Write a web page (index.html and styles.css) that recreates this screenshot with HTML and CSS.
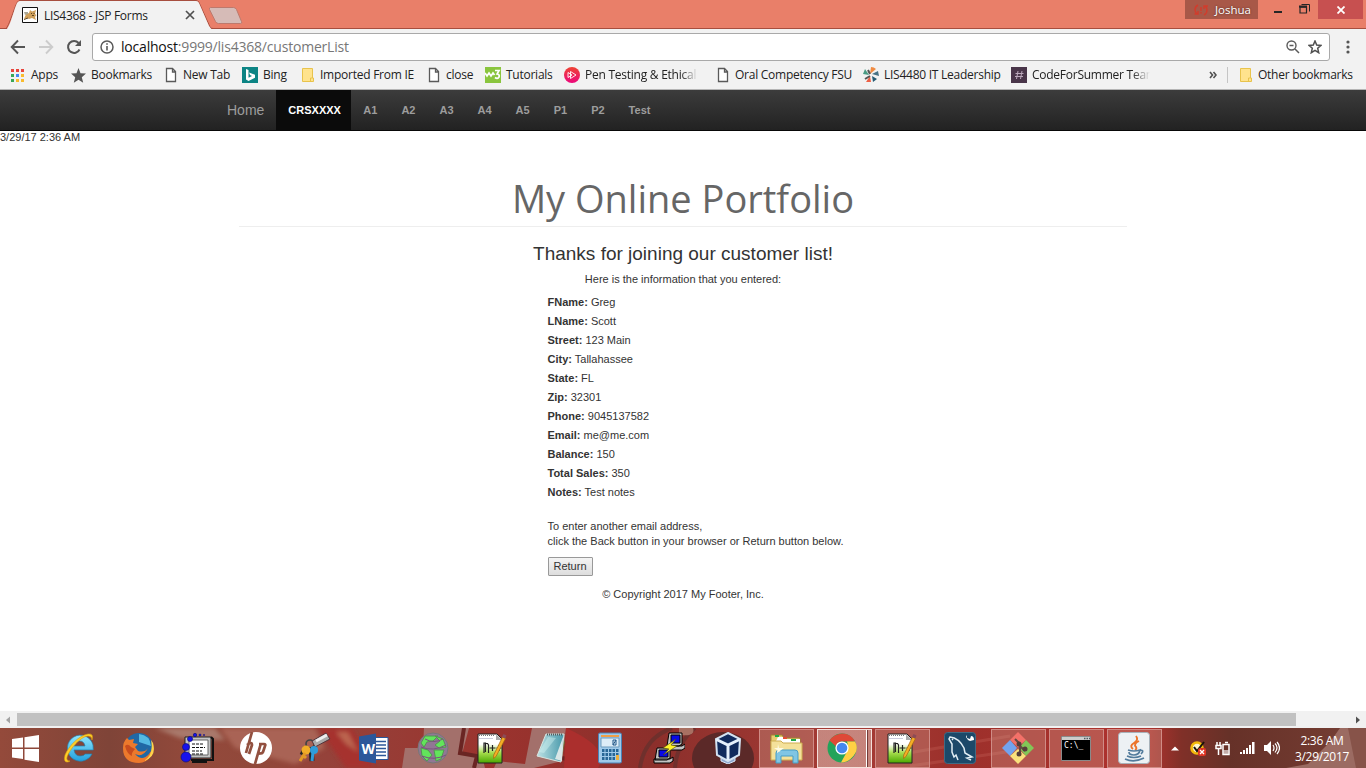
FILE: index.html
```html
<!DOCTYPE html>
<html lang="en">
<head>
<meta charset="utf-8">
<title>LIS4368 - JSP Forms</title>
<link rel="stylesheet" href="styles.css">
</head>
<body>
<svg width="0" height="0" class="defs">
  <symbol id="page" viewBox="0 0 12 16"><path d="M1.5 1.5h6l3 3v10h-9zM7.5 1.5v3.5h3" fill="#fff" stroke="#5a5a5a" stroke-width="1.3"/></symbol>
  <symbol id="folder" viewBox="0 0 14 16"><path d="M1.5 1.5h10v9.500h1v3.500h-11z" fill="#ffe38d" stroke="#e8c34c"/><path d="M9.500 14v-3h2" fill="none" stroke="#e8c34c"/></symbol>
  <symbol id="npp" viewBox="0 0 32 32">
    <defs><linearGradient id="npg" x1="0" y1="0" x2="0" y2="1"><stop offset=".35" stop-color="#fff"/><stop offset=".65" stop-color="#a5dc4c"/><stop offset="1" stop-color="#4aa800"/></linearGradient></defs>
    <path d="M2 2h19l5 5v24H2z" fill="url(#npg)" stroke="#222"/><path d="M20 2v6h6z" fill="#aaa"/><path d="M3 3.500h16" stroke="#777" stroke-dasharray="1 1"/><path d="M3 6.500h14" stroke="#ccd"/>
    <path d="M8 21V11h1.500v9M9.500 11.500h2l1 1.500v8M13.500 16h6m-3-3v6M20.500 16h5m-2.500-3v6" fill="none" stroke="#222" stroke-width="1.200"/>
    <path d="M26.500 5l3 1.500-9.500 18-2.500 2 .2-3.500z" fill="#f5ae25" stroke="#a36510" stroke-width=".7"/><path d="M27.500 2l3 1.500-1.300 3-3.200-1.500z" fill="#8c4b57"/>
  </symbol>
</svg>
<div class="browser">
  <header class="titlebar">
    <svg class="tab-shape" width="250" height="30" viewBox="0 0 250 30"><path d="M0 28.500h5.500C9 28 15 4 18 1.500Q18.500.5 20 .5H196Q198 .5 199 2.500L210 27q.7 1.500 3 1.500h37" fill="none" stroke="#a74e3f"/><path d="M6 30C11 26 15 4 18 2q1-1 2-1H196q2 0 3 2l10 23q2 3 4 4z" fill="#f2f2f2"/><path d="M210.500 7.500h23q2 0 3 2l5 12q1 2-1 2h-22q-2 0-3-2l-6-12q-.5-2 1-2z" fill="#d6bbb7" stroke="#bd796d"/></svg>
    <div class="tab">
      <svg width="16" height="16" viewBox="0 0 16 16"><path d="M.5.500h15v15H.5z" fill="#fff" stroke="#111"/><path d="M2 12l2-5 3-1 1-3 2 1.500 4-1.500-1 4 1.500 1L13 10l1 3-4-2-3 1-2-1z" fill="#d0a05a"/><path d="M2 12.500l4-1.500M9 6l1 1M12 6v1M10 8.500h2" stroke="#5c4321"/><path d="M2 5h4v2l-3 1z" fill="#aaa795"/></svg>
      <span class="tab-title">LIS4368 - JSP Forms</span>
      <svg class="tab-close" width="10" height="10" viewBox="0 0 10 10"><path d="M1 1l8 8M9 1L1 9" stroke="#505050" stroke-width="1.700"/></svg>
    </div>
    <div class="profile"><svg width="14" height="12" viewBox="0 0 14 12"><path d="M4 1Q1 2.500 1 6q0 2 2 4M.5 10H4V7M10 11q3-1.500 3-5 0-2-2-4m3 0h-4v3M7 3v4M7 8v1.500" fill="none" stroke="#d33b2b" stroke-width="1.400"/></svg><span>Joshua</span></div>
    <div class="win-btns">
      <svg width="8" height="18" viewBox="0 0 8 18"><path d="M0 12h8" stroke="#262626" stroke-width="2"/></svg>
      <svg width="11" height="18" viewBox="0 0 11 18"><path d="M1 7h6.500v6H1z" fill="none" stroke="#262626" stroke-width="1.200"/><path d="M.5 7h7.500M2.500 4.500h8v7" fill="none" stroke="#262626"/><path d="M0 6.500h8" stroke="#262626" stroke-width="2"/></svg>
    </div>
    <div class="win-close"><svg width="8" height="8" viewBox="0 0 8 8"><path d="M.5.500l7 7M7.500.500l-7 7" stroke="#fff" stroke-width="1.800"/></svg></div>
  </header>
  <div class="toolbar">
    <div class="history">
      <svg width="16" height="16" viewBox="0 0 16 16"><path d="M15 8H2m6-6.500L1.700 8 8 14.500" fill="none" stroke="#555" stroke-width="1.900"/></svg>
      <svg width="16" height="16" viewBox="0 0 16 16"><path d="M1 8h13M8 1.500L14.300 8 8 14.500" fill="none" stroke="#ccc" stroke-width="1.900"/></svg>
      <svg width="16" height="16" viewBox="0 0 16 16"><path d="M13.500 10.500A6 6 0 1 1 12.600 4" fill="none" stroke="#555" stroke-width="2"/><path d="M15 1v6H9z" fill="#555"/></svg>
    </div>
    <div class="omnibox">
      <svg width="14" height="14" viewBox="0 0 14 14"><circle cx="7" cy="7" r="6" fill="none" stroke="#5a5a5a" stroke-width="1.500"/><path d="M7 6v4.500M7 3.300v1.500" stroke="#5a5a5a" stroke-width="1.600"/></svg>
      <span class="url"><b>localhost</b>:9999/lis4368/customerList</span>
      <svg width="14" height="14" viewBox="0 0 14 14"><circle cx="5.500" cy="5.500" r="4.500" fill="none" stroke="#5a5a5a" stroke-width="1.400"/><path d="M9 9l4 4M3.500 5.500h4" stroke="#5a5a5a" stroke-width="1.500"/></svg>
      <svg class="star" width="14" height="14" viewBox="0 0 14 14"><path d="M7 1l1.700 4.100 4.300.3-3.300 2.900 1 4.400L7 10.300l-3.700 2.400 1-4.400L1 5.400l4.300-.3z" fill="none" stroke="#505050" stroke-width="1.500"/></svg>
    </div>
    <svg class="dots" width="4" height="14" viewBox="0 0 4 14"><g fill="#555"><circle cx="2" cy="2" r="1.600"/><circle cx="2" cy="7" r="1.600"/><circle cx="2" cy="12" r="1.600"/></g></svg>
  </div>
  <div class="bookmarks">
    <div class="bm"><svg width="14" height="14" viewBox="0 0 14 14"><path d="M1 1h3v3H1zM6 1h3v3H6zM11 1h3v3h-3z" fill="#e8453c"/><path d="M1 6h3v3H1zM1 11h3v3H1z" fill="#3aa757"/><path d="M6 6h3v3H6z" fill="#4688f1"/><path d="M11 6h3v3h-3zM6 11h3v3H6zM11 11h3v3h-3z" fill="#f9bb2d"/></svg><span class="apps">Apps</span></div>
    <div class="bm"><svg width="15" height="15" viewBox="0 0 15 15"><path d="M7.500 0l2 5.200 5.500.4-4.200 3.600 1.400 5.500-4.700-3-4.700 3 1.400-5.500L0 5.600l5.500-.4z" fill="#555"/></svg><span>Bookmarks</span></div>
    <div class="bm narrow"><svg width="12" height="16"><use href="#page"/></svg><span>New Tab</span></div>
    <div class="bm"><svg width="16" height="16" viewBox="0 0 16 16"><path d="M0 0h16v16H0z" fill="#0c8484"/><path d="M4 2l2.500 1v7.700L10 9 8 8 7 5.500l6 2.200v3L6.500 14 4 12.500z" fill="#fff"/></svg><span>Bing</span></div>
    <div class="bm f"><svg width="14" height="16"><use href="#folder"/></svg><span>Imported From IE</span></div>
    <div class="bm narrow"><svg width="12" height="16"><use href="#page"/></svg><span>close</span></div>
    <div class="bm"><svg width="16" height="16" viewBox="0 0 16 16"><path d="M0 0h16v16H0z" fill="#8ac53e"/><path d="M0 6l2 3 2-3 2 3 2-3 1.500 2M10 3.500h4L12 7q3 .5 2 3-1.500 2.500-4 .5" fill="none" stroke="#fff" stroke-width="1.700"/></svg><span>Tutorials</span></div>
    <div class="bm fade"><svg width="16" height="16" viewBox="0 0 16 16"><defs><linearGradient id="ps" x1="0" y1="0" x2="0" y2="1"><stop stop-color="#ee4333"/><stop offset="1" stop-color="#ec087c"/></linearGradient></defs><circle cx="8" cy="8" r="8" fill="url(#ps)"/><path d="M6.500 4.500L12 8l-5.500 3.500zM4 5.500v5L8 8z" fill="none" stroke="#fff" stroke-width=".9"/></svg><span>Pen Testing &amp; Ethical</span></div>
    <div class="bm narrow"><svg width="12" height="16"><use href="#page"/></svg><span>Oral Competency FSU</span></div>
    <div class="bm"><svg width="16" height="16" viewBox="0 0 16 16"><path d="M7 7L8 0q3 0 5 2z" fill="#f08b42"/><path d="M9 7l6-3 1 5z" fill="#467184"/><path d="M9 9l5 3-4 3z" fill="#255a72"/><path d="M7 9l1 6-5 0z" fill="#ee6045"/><path d="M6 8L0 7l2-5z" fill="#4a9b84"/><path d="M2 12l5-3M5 3l2 4" stroke="#555" stroke-width="2"/></svg><span>LIS4480 IT Leadership</span></div>
    <div class="bm fade"><svg width="16" height="16" viewBox="0 0 16 16"><path d="M0 0h16v16H0z" fill="#493549"/><path d="M7 4L5.500 12M11 4L9.500 12M4.500 6.500h8M4 9.500h8" stroke="#bba8bb"/></svg><span class="code">CodeForSummer Team</span></div>
    <svg class="more" width="8" height="8" viewBox="0 0 8 8"><path d="M1 1l2.500 3L1 7M4.500 1L7 4 4.500 7" fill="none" stroke="#505050" stroke-width="1.600"/></svg>
    <div class="bm f other"><svg width="14" height="16"><use href="#folder"/></svg><span>Other bookmarks</span></div>
  </div>
  <nav class="nav"><a class="brand">Home</a><a class="active">CRSXXXX</a><a>A1</a><a>A2</a><a>A3</a><a>A4</a><a>A5</a><a>P1</a><a>P2</a><a>Test</a></nav>
  <main class="page">
    <div class="stamp">3/29/17 2:36 AM</div>
    <h1>My Online Portfolio</h1>
    <h2>Thanks for joining our customer list!</h2>
    <p class="intro">Here is the information that you entered:</p>
    <div class="info">
      <div><b>FName:</b> Greg</div><div><b>LName:</b> Scott</div><div><b>Street:</b> 123 Main</div><div><b>City:</b> Tallahassee</div><div><b>State:</b> FL</div><div><b>Zip:</b> 32301</div><div><b>Phone:</b> 9045137582</div><div><b>Email:</b> me@me.com</div><div><b>Balance:</b> 150</div><div><b>Total Sales:</b> 350</div><div><b>Notes:</b> Test notes</div>
      <p class="again">To enter another email address,<br>click the Back button in your browser or Return button below.</p>
      <button>Return</button>
    </div>
    <footer>© Copyright 2017 My Footer, Inc.</footer>
  </main>
  <div class="scroll"><svg width="17" height="16" viewBox="0 0 17 16"><path d="M10 4.500v7L6 8z" fill="#a3a3a3"/></svg><div class="thumb"></div><svg width="17" height="16" viewBox="0 0 17 16"><path d="M7 4.500v7L11 8z" fill="#505050"/></svg></div>
</div>
<div class="taskbar">
  <svg class="wall" width="1366" height="40" viewBox="0 0 1366 40">
    <defs><linearGradient id="wg"><stop stop-color="#944a3b"/><stop offset=".08" stop-color="#7f4438"/><stop offset=".14" stop-color="#93493b"/><stop offset=".19" stop-color="#91483a"/><stop offset=".24" stop-color="#95423a"/><stop offset=".36" stop-color="#9b332e"/><stop offset=".48" stop-color="#8c2f2b"/><stop offset=".62" stop-color="#a63c36"/><stop offset=".7" stop-color="#9c302b"/><stop offset=".84" stop-color="#b0322e"/><stop offset=".865" stop-color="#803028"/><stop offset=".9" stop-color="#663128"/><stop offset=".96" stop-color="#70392f"/><stop offset="1" stop-color="#754238"/></linearGradient><filter id="bl"><feGaussianBlur stdDeviation="2"/></filter></defs>
    <path d="M0 0h1366v40H0z" fill="url(#wg)"/>
    <g filter="url(#bl)"><path d="M155 0h60l10 12-45-2z" fill="#a9796c"/><path d="M220 0h95l10 20-30 16-60-16z" fill="#a96454"/><path d="M318 0l28 40h28L352 0z" fill="#a6322f"/><path d="M336 4l12 0 10 20-12-8z" fill="#bb6550"/></g>
    <path d="M424 0h45l-7 26 20 2 3 12h-83l3-20 18 0z" fill="#a3706b"/><path d="M532 0h34l-4 33-28 7h-40l3-7 28 3z" fill="#a3706b"/><path d="M464 0l-4 25 17 3-3 12M562 30l28 6" fill="none" stroke="#6a2523" stroke-width="4"/>
    <path d="M566 0q45 20 32 40h-34z" fill="#ab2f2d"/><path d="M640 40q4-30 32-40M675 40q2-25 20-40" fill="none" stroke="#62312d" stroke-width="4" opacity=".7"/><path d="M679 0h14q3 9-14 7z" fill="#a87062"/><ellipse cx="723" cy="30" rx="31" ry="26" fill="#5b2928"/>
    <path d="M890 28l120-20M910 38l110-16" stroke="#bf5a51" stroke-width="3" opacity=".4"/><path d="M1286 40l22-4 22-22 10-14h26v40z" fill="#9b6b62"/><path d="M1348 0h18v40h-10z" fill="#875349"/>
  </svg>
  <div class="start"><svg width="27" height="27" viewBox="0 0 27 27"><path d="M0 4l11-1.500v10H0zM12.500 2.300L27 0v12.500H12.500zM0 14h11v10L0 22.500zM12.500 14H27v13l-14.500-2.300z" fill="#fff"/></svg></div>
  <div class="pinned">
    <i><svg width="32" height="32" viewBox="0 0 32 32"><defs><linearGradient id="ie" x1="0" y1="0" x2="0" y2="1"><stop stop-color="#8fe7ff"/><stop offset="1" stop-color="#23a0dd"/></linearGradient></defs><path d="M29 22a13 13 0 1 1 1-9l.3 5H11q1 6 6 6 4 0 5-2zM11 14h11q-1-5-5.500-5T11 14z" fill="url(#ie)" stroke="#247fae" stroke-width=".7"/><path d="M5 30Q0 31 2 23C6 14 15 4 25 2q6-1 4 6 0-4-4-4C17 5 7 17 4 25q-1 4 3 4z" fill="#ffce27" stroke="#d99d11" stroke-width=".6"/></svg></i>
    <i><svg width="32" height="32" viewBox="0 0 32 32"><circle cx="17" cy="15" r="14" fill="#2068a5"/><path d="M17 2q11 1 12 12L17 10z" fill="#54b9e3"/><path d="M30 10q2 20-13 21Q1 31 1 16q0-6 4-10l2 2 5-1-1 4 5 1-3 3 3 4q7 2 10-3-5 10-13 6 7 8 14 0 5-6 3-12z" fill="#ec792c"/><path d="M29 8q3 15-7 21 13-4 9-18z" fill="#ffd34a"/><path d="M3 14q3-3 6 1l4 2q-4 4-3 7-5-2-7-10z" fill="#c94c1e"/></svg></i>
    <i><svg width="34" height="32" viewBox="0 0 34 32"><path d="M5 5h26v21H5z" fill="#c3c3c3" stroke="#222"/><path d="M9 8h19v15H9z" fill="#fff" stroke="#666"/><path d="M31 5l2 2v21H11" fill="none" stroke="#111" stroke-width="2"/><path d="M12 12h12M12 15.500h13M12 19h10M12 22h12" stroke="#111" stroke-dasharray="3 1"/><path d="M12 30h15" stroke="#111" stroke-width="2"/><g fill="#1712ed" stroke="#101078" stroke-width=".7"><circle cx="6" cy="25" r="5"/><circle cx="6" cy="15" r="3.500"/><circle cx="10" cy="7" r="2.500"/><circle cx="15" cy="3" r="1.700"/><circle cx="20" cy="3" r="1"/><circle cx="24" cy="3" r=".6"/></g></svg></i>
    <i><svg width="32" height="32" viewBox="0 0 32 32"><circle cx="16" cy="16" r="16" fill="#fff"/><path d="M12 0L6 21M7 13q5-4 5 0l-3 9M21 11l-6 21M19 12h5q2 0 1 2l-2 6q-.7 2-6 1.500" fill="none" stroke="#92503f" stroke-width="2.700"/></svg></i>
    <i><svg width="32" height="32" viewBox="0 0 32 32"><circle cx="11" cy="12" r="4" fill="none" stroke="#444" stroke-width="1.700"/><path d="M13 9L27 1l4 6-15 8z" fill="#aaa" stroke="#54343b"/><path d="M17 9L28 3" stroke="#eee" stroke-width="3"/><path d="M7 15l-4 8M12 15l1 14" stroke="#252525" stroke-width="5"/><circle cx="7" cy="18" r="4.500" fill="#f1ad28"/><path d="M6 21l-5 8M5 24l2 2" stroke="#e19925" stroke-width="3"/><circle cx="15" cy="18" r="4" fill="#2f9dda"/><path d="M14 20l-1 9" stroke="#2f9dda" stroke-width="3"/></svg></i>
    <i><svg width="31" height="31" viewBox="0 0 31 31"><path d="M15 4.500h15v22H15z" fill="#fff" stroke="#2b579a"/><path d="M18 8.500h10M18 12h10M18 15.500h10M18 19h10M18 22.500h10" stroke="#2b579a" stroke-width="1.500"/><path d="M1 3.500L18 .5v30L1 27.500z" fill="#2b579a"/><text x="3.500" y="20.500" class="w">W</text></svg></i>
    <i><svg width="32" height="32" viewBox="0 0 32 32"><circle cx="16" cy="16" r="15" fill="#917794" stroke="#777"/><path d="M8 4h13l-5 5-6 1-3 5-3-4zM18 4l8 3 3 8-7 1-4-3 5-4zM4 16l7 2 4 5-5 6-5-5zM17 18h10l-3 9-5 2z" fill="#62e45b" stroke="#559454"/><path d="M4 15q12 5 25-2M5 24q12 5 24-1M8 7q9 5 18 0" fill="none" stroke="#7c527f"/></svg></i>
    <i><svg width="32" height="32"><use href="#npp"/></svg></i>
    <i><svg width="32" height="32" viewBox="0 0 32 32"><defs><linearGradient id="np"><stop stop-color="#bde2e5"/><stop offset="1" stop-color="#4798aa"/></linearGradient></defs><path d="M27 5l3 5-4 20-4-2z" fill="#716836"/><path d="M11 2h18l-3 28-24-6z" fill="url(#np)" stroke="#d9e4df"/><path d="M28 5l-1 24-7-2z" fill="#d9e7e7"/><path d="M12 2.500h16" stroke="#545a5d" stroke-width="2" stroke-dasharray="1 1"/><path d="M13 5l8 1-12 15-5-1z" fill="#d9f7f4" opacity=".4"/></svg></i>
    <i><svg width="24" height="32" viewBox="0 0 24 32"><rect x=".5" y="1" width="23" height="30" rx="1.500" fill="#9fcaea" stroke="#4983b7"/><path d="M3 3h18v2H3z" fill="#ef9f48"/><path d="M3 6h18v9H3z" fill="#dcecf7" stroke="#6d9bbd"/><path d="M15 8h3v5h-3zM15 13l3-5" fill="none" stroke="#235889"/><path d="M4 18.500h17M4 22.500h17M4 26.500h17" stroke="#286797" stroke-width="3" stroke-dasharray="2.500 1"/><path d="M18 23h3v5h-3z" fill="#efb13f"/></svg></i>
    <i><svg width="32" height="32" viewBox="0 0 32 32"><g stroke="#000" fill="#c2c2c2"><path d="M16 1h13v11l-3 2H14zM14 14h15l3-2v4l-3 2H14z"/><path d="M4 16h13v10l-3 2H2zM1 27h16l3-2v4l-3 2H1z"/></g><path d="M18 3h9v8h-9zM6 18h9v7H6z" fill="#0909e7" stroke="#000"/><path d="M23 7l-13 9 6 1-6 6 14-9-6-1z" fill="#fff32a" stroke="#46430a" stroke-width=".6"/></svg></i>
    <i><svg width="30" height="32" viewBox="0 0 30 32"><path d="M8 25v4l7 3 7-3v-4z" fill="#8da7cf" stroke="#dbe8f8"/><path d="M15 1l12 6-1 16-11 6-11-6L3 7z" fill="#112b5d" stroke="#d4e3f2" stroke-width="2"/><path d="M3.500 7.500L15 13l11.500-5.500M15 13v15" stroke="#e5f0fc" stroke-width="3" fill="none"/></svg></i>
  </div>
  <div class="running">
    <i><b><svg width="33" height="32" viewBox="0 0 33 32"><path d="M1 3h11l2 3h16v20H1z" fill="#e6cc70" stroke="#9e8132"/><path d="M8 5h5l2 2h15v4H5z" fill="#fff"/><path d="M5 4h4M13 6h4M21 8h5" stroke="#20a944" stroke-width="2"/><path d="M13 6h4" stroke="#e24b34" stroke-width="2"/><path d="M1 9h10l2 2h19v17H1z" fill="#f4e19a" stroke="#cead50"/><path d="M6 31v-10q0-3 3-3h16q3 0 3 3v10h-5v-7H11v7z" fill="#80c5e4" stroke="#479dc5"/><path d="M8 12l2 8-6-4h10l-7 5z" fill="#fffbe1"/></svg></b></i>
    <i><b class="current"><svg width="30" height="30" viewBox="0 0 30 30"><circle cx="15" cy="15" r="14.500" fill="#24a35a"/><path d="M2.500 7.500Q7 1 15 .5q9 0 13 8H15q-5 0-6 5z" fill="#df4937"/><path d="M28 8.500q5 9-4 17-4 4-10 4l6-11q2-4 0-10z" fill="#ffd044"/><circle cx="15" cy="15" r="6.600" fill="#fff"/><circle cx="15" cy="15" r="5.300" fill="#4588ef"/></svg></b></i>
    <i><b><svg width="32" height="32"><use href="#npp"/></svg></b></i>
    <i><svg width="32" height="32" viewBox="0 0 32 32"><rect x=".5" y=".5" width="31" height="31" rx="3" fill="#1c4969" stroke="#416a83"/><path d="M20 16q-5-10-14-11l-1 2 3 5 0 8 2 5 2-2 2 5M20 16l1 5 7 4-5 1 4 2M8 7l1 1" fill="none" stroke="#e1eef4" stroke-width="1.500"/><path d="M23 3v3l3 1 1-3q3 0 3 4l-4 1-2-1-2-3z" fill="#fff"/></svg></i>
    <i><b><svg width="32" height="32" viewBox="0 0 32 32"><path d="M16 0l8 8-8 7-8-7z" fill="#f37169"/><path d="M8 8l7 8-7 8-8-8z" fill="#72a3ef"/><path d="M24 8l8 8-8 8-7-8z" fill="#82c657"/><path d="M16 17l8 7-8 8-8-8z" fill="#fae17c"/><path d="M13 7l5 5v10M18 14l5 5" fill="none" stroke="#614844" stroke-width="2"/><g fill="#553e3a"><circle cx="17" cy="12" r="2.500"/><circle cx="23" cy="17" r="2.500"/><circle cx="17" cy="22" r="2.500"/></g></svg></b></i>
    <i><b><svg width="30" height="25" viewBox="0 0 30 25"><path d="M.5.500h29v24H.5z" fill="#000" stroke="#8a8a8a"/><path d="M1 1h28v3H1z" fill="#ccc"/><path d="M23 2.500h6" stroke="#51585e" stroke-width="1.500" stroke-dasharray="1.500 1"/><text x="3" y="12" class="cmd">C:\_</text></svg></b></i>
    <i><b><svg width="32" height="32" viewBox="0 0 32 32"><rect x=".5" y=".5" width="31" height="31" rx="3" fill="#edf1f4" stroke="#a8b2ba"/><path d="M18 4q3 4-2 7t-1 6M21 9q-6 3-3 6 1 2-1 3" fill="none" stroke="#ec742a" stroke-width="1.900"/><path d="M10 18q6 2 12 0-1 5-6 5t-5-3M22 18q5 0 1 4M9 24q7 3 14 0M7 27q9 4 19-1" fill="none" stroke="#527b9c" stroke-width="1.700"/></svg></b></i>
  </div>
  <div class="tray">
    <svg class="up" width="8" height="5" viewBox="0 0 8 5"><path d="M0 4.500L4 .5l4 4z" fill="#fff"/></svg>
    <svg width="16" height="16" viewBox="0 0 16 16"><circle cx="7" cy="8" r="5.500" fill="#fff5cd" stroke="#f3b90b" stroke-width="2.600"/><path d="M4 7l3 4 7-9" fill="none" stroke="#17130a" stroke-width="2"/><rect x="8" y="8" width="8" height="8" rx="2" fill="#df3525"/><path d="M10 10l4 4M14 10l-4 4" stroke="#fff" stroke-width="1.300"/></svg>
    <svg width="16" height="16" viewBox="0 0 16 16"><path d="M8 4.500h6v10H8zM10 2.500h3M1 5.500h5v3H1zM3.500 8v7M2 2v3M5 2v3" fill="none" stroke="#fff" stroke-width="1.500"/><path d="M8.500 10h5v4h-5z" fill="#fff" opacity=".6"/></svg>
    <svg width="15" height="12" viewBox="0 0 15 12"><path d="M0 10h2v2H0zM3 8h2v4H3zM6 6h2v6H6zM9 3h2v9H9zM12 0h2.500v12H12z" fill="#fff"/></svg>
    <svg width="16" height="14" viewBox="0 0 16 14"><path d="M0 4h3l4-4v14l-4-4H0z" fill="#fff"/><path d="M9 4q2 3 0 6M11 2.500q4 4 0 9M13 1q5 6 0 12" fill="none" stroke="#fff" stroke-width="1.200"/></svg>
  </div>
  <div class="clock"><span>2:36 AM</span><span>3/29/2017</span></div>
</div>
</body>
</html>
```
FILE: styles.css
```css
* { box-sizing: border-box; }
body { margin: 0; width: 1366px; height: 768px; overflow: hidden; background: #fff; font: 11px/15px "Liberation Sans", Arial, sans-serif; color: #333; }
svg { display: block; flex: none; }
.defs { position: absolute; }
.browser { height: 728px; display: flex; flex-direction: column; }
.titlebar { height: 29px; flex: none; display: flex; align-items: flex-start; position: relative; background: linear-gradient(#e97f69 27px, #e97f69 28px, #a74e3f 28px); font-family: "Open Sans", sans-serif; }
.tab-shape { position: absolute; left: 0; top: 0; }
.tab { position: relative; display: flex; align-items: center; width: 210px; height: 30px; padding-left: 22px; }
.tab-title { width: 141px; margin-left: 6px; font-size: 12px; letter-spacing: -.28px; color: #222; white-space: nowrap; }
.profile { margin-left: 975px; width: 73px; height: 19px; display: flex; align-items: center; gap: 7px; padding-left: 9px; background: #a85848; color: #fff; font-size: 11.5px; text-shadow: 0 0 2px #4a2a24; }
.win-btns { width: 60px; display: flex; padding-left: 16px; gap: 17px; }
.win-close { width: 45px; height: 19px; display: grid; place-items: center; background: #c75050; }
.toolbar { height: 32px; flex: none; display: flex; align-items: center; background: #f2f2f2; padding: 4px 16px 0 10px; }
.history { display: flex; gap: 12px; width: 82px; }
.omnibox { width: 1238px; height: 28px; display: flex; align-items: center; padding: 0 7px; background: #fff; border: 1px solid #a9a9a9; border-radius: 3px; }
.url { flex: 1; margin-left: 7px; font: 14px/20px "Open Sans", sans-serif; letter-spacing: -.2px; color: #777; }
.url b { font-weight: 400; color: #111; }
.star { margin-left: 8px; }
.dots { margin-left: 16px; }
.bookmarks { height: 29px; flex: none; display: grid; grid-template-columns: 61px 94px 77px 59px 127px 57px 79px 153px 146px 148px 198px 18px 1fr; align-items: center; padding-left: 10px; background: #f2f2f2; border-bottom: 1px solid #b5b5b5; font: 12px/16px "Open Sans", sans-serif; letter-spacing: -.25px; color: #222; white-space: nowrap; }
.bm { display: flex; align-items: center; gap: 5px; }
.apps { margin-left: 2px; }
.narrow { gap: 6px; }
.f { gap: 5px; }
.fade span { width: 113px; overflow: hidden; -webkit-mask-image: linear-gradient(90deg, #000 85%, transparent); }
.fade .code { width: 118px; }
.other { border-left: 1px solid #c5c5c5; padding-left: 11px; }
.nav { height: 41px; flex: none; display: flex; padding-left: 215px; background: linear-gradient(#3c3c3c, #222); border-bottom: 1px solid #080808; color: #9d9d9d; line-height: 40px; }
.nav a { padding: 0 12px; }
.nav .brand { font-size: 14px; }
.nav .active { color: #fff; font-weight: 700; background: #0b0b0b; width: 75px; }
.nav a:not(.brand):not(.active) { font-weight: 700; }
.page { flex: 1; display: flex; flex-direction: column; align-items: center; }
.stamp { align-self: flex-start; margin-top: -1px; }
h1 { width: 888px; height: 48px; margin: 34px 0 0; padding-bottom: 8px; border-bottom: 1px solid #eee; text-align: center; font: 38px/38px "Open Sans", sans-serif; color: #666; }
h2 { margin: 16px 0 0; font-size: 19px; line-height: 22px; font-weight: 400; }
.intro { margin: 7px 0 0; }
.info { width: 296px; margin: 6px 0 0 25px; line-height: 19px; white-space: nowrap; }
.again { margin: 17px 0 8px; line-height: 15px; }
.info button { display: block; width: 45px; height: 19px; padding: 0; border: 1px solid #999; border-radius: 1px; background: linear-gradient(#f4f4f4, #ddd); color: #333; font: 11px/15px "Liberation Sans", sans-serif; }
footer { margin-top: 11px; }
.scroll { height: 17px; flex: none; display: flex; align-items: center; background: #f1f1f1; }
.thumb { width: 1279px; height: 13px; margin-right: 53px; background: #c1c1c1; }
.taskbar { height: 40px; position: relative; display: flex; }
.wall { position: absolute; left: 0; top: 0; }
.start, .pinned, .running, .tray, .clock { position: relative; display: flex; align-items: center; }
.start { width: 49px; padding-left: 12px; }
.pinned i { width: 59px; display: grid; place-items: center; }
.running i { width: 58px; display: flex; align-items: center; justify-content: center; height: 40px; }
.running b { width: 55px; height: 39px; margin-left: 0; display: grid; place-items: center; border: 1px solid #d08c86; background: rgba(220, 190, 170, .27); }
.running .current { width: 55px; padding-right: 5px; border-color: #f4dfda; background: linear-gradient(90deg, rgba(230, 205, 195, .5) 48px, #fff 48px, #fff 49px, #713c38 49px, #713c38 50px, rgba(230, 205, 195, .5) 50px); }
.w { font: 700 14px "Open Sans", sans-serif; fill: #fff; }
.cmd { font: 8px "DejaVu Sans Mono", monospace; fill: #fff; }
.tray { width: 116px; padding-left: 8px; gap: 9px; }
.up { margin-right: 2px; }
.clock { width: 86px; flex-direction: column; justify-content: center; padding: 1px 0 0 0; color: #fff; font: 12px/16px "Open Sans", sans-serif; letter-spacing: -.3px; }
```
